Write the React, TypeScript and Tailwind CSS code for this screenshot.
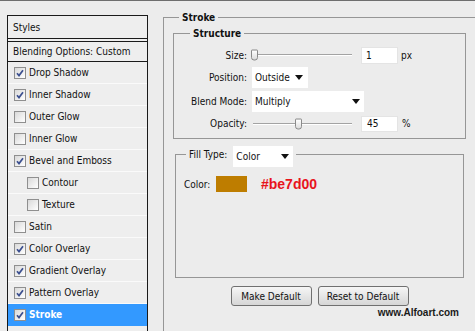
import React from "react";

const FONT = "font-['DejaVu_Sans_Condensed','Liberation_Sans',sans-serif]";

function Check({ checked }: { checked: boolean }) {
  return (
    <span className="w-[12px] h-[12px] shrink-0 border border-[#8f8f8f] bg-gradient-to-br from-[#d9d9d9] to-white flex items-center justify-center">
      {checked && (
        <svg width="8" height="8" viewBox="0 0 8 8">
          <path d="M1 4.2 L3 6.6 L7 1.2" stroke="#3b4f8f" strokeWidth="1.7" fill="none" />
        </svg>
      )}
    </span>
  );
}

function Tri() {
  return (
    <svg width="8" height="5" viewBox="0 0 8 5" className="shrink-0">
      <polygon points="0,0 8,0 4,5" fill="#111" />
    </svg>
  );
}

type Item = { label: string; checked: boolean; indent?: boolean; selected?: boolean };

const items: Item[] = [
  { label: "Drop Shadow", checked: true },
  { label: "Inner Shadow", checked: true },
  { label: "Outer Glow", checked: false },
  { label: "Inner Glow", checked: false },
  { label: "Bevel and Emboss", checked: true },
  { label: "Contour", checked: false, indent: true },
  { label: "Texture", checked: false, indent: true },
  { label: "Satin", checked: false },
  { label: "Color Overlay", checked: true },
  { label: "Gradient Overlay", checked: true },
  { label: "Pattern Overlay", checked: true },
  { label: "Stroke", checked: true, selected: true },
];

function Thumb({ className }: { className: string }) {
  return (
    <div
      className={
        "absolute top-1/2 -translate-y-1/2 w-[7px] h-[11px] border border-[#8a8a8a] rounded-b-[3px] rounded-t-[1px] bg-gradient-to-b from-white to-[#dcdcdc] " +
        className
      }
    />
  );
}

function Track() {
  return <div className="absolute left-[2px] right-0 top-1/2 -translate-y-1/2 h-[2px] border-t border-[#a3a3a3] border-b border-b-white" />;
}

export default function App() {
  return (
    <div className={"w-[475px] h-[331px] overflow-hidden bg-[#ececec] text-[10px] leading-[13px] text-[#111] " + FONT}>
      <div className="h-px bg-[#6e6e6e]" />
      <div className="flex">
        {/* Left styles panel */}
        <div className="ml-[7px] mt-[14px] w-[141px] h-[400px] shrink-0 border border-[#1a1a1a] bg-[#eeeeee]">
          <div className="h-[23px] flex items-center pl-[5px] border-b border-[#1a1a1a]">Styles</div>
          <div className="mt-[2px] border-t border-b border-[#1a1a1a] h-[21px] flex items-center pl-[5px]">
            Blending Options: Custom
          </div>
          {items.map((it) => (
            <div
              key={it.label}
              className={
                "h-[22px] flex items-center gap-[3px] border-b " +
                (it.indent ? "pl-[19px] " : "pl-[6px] ") +
                (it.selected ? "bg-[#3399ff] text-white font-bold border-[#3399ff]" : "border-[#fafafa]")
              }
            >
              <Check checked={it.checked} />
              <span>{it.label}</span>
            </div>
          ))}
        </div>

        {/* Main area */}
        <div className="ml-[15px] mt-[10px] shrink-0">
          <fieldset className="w-[330px] h-[340px] border-t border-l border-[#969696] pl-[9px]">
            <legend className="ml-[6px] px-[3px] font-bold leading-[13px]">Stroke</legend>

            <fieldset className="mt-[3px] w-[293px] border border-[#969696] pb-[6px]">
              <legend className="ml-[16px] px-[3px] font-bold leading-[13px]">Structure</legend>
              <div className="pt-[6px] flex flex-col gap-[3px]">
                <div className="h-[18px] flex items-center">
                  <span className="w-[73px] text-right">Size:</span>
                  <div className="relative ml-[4px] w-[101px] h-full">
                    <Track />
                    <Thumb className="left-0" />
                  </div>
                  <div className="ml-[9px] w-[37px] h-[17px] bg-white border border-[#e4e4e4] flex items-center pl-[4px]">1</div>
                  <span className="ml-[3px]">px</span>
                </div>
                <div className="h-[21px] flex items-center">
                  <span className="w-[73px] text-right">Position:</span>
                  <div className="ml-[5px] w-[56px] h-full bg-white flex items-center justify-between pl-[3px] pr-[5px]">
                    <span>Outside</span>
                    <Tri />
                  </div>
                </div>
                <div className="h-[21px] flex items-center">
                  <span className="w-[73px] text-right">Blend Mode:</span>
                  <div className="ml-[5px] w-[112px] h-full bg-white flex items-center justify-between pl-[3px] pr-[4px]">
                    <span>Multiply</span>
                    <Tri />
                  </div>
                </div>
                <div className="h-[17px] flex items-center">
                  <span className="w-[73px] text-right">Opacity:</span>
                  <div className="relative ml-[4px] w-[101px] h-full">
                    <Track />
                    <Thumb className="left-[44px]" />
                  </div>
                  <div className="ml-[9px] w-[37px] h-[16px] bg-white border border-[#e4e4e4] flex items-center pl-[5px]">45</div>
                  <span className="ml-[4px]">%</span>
                </div>
              </div>
            </fieldset>

            <fieldset className="mt-[7px] mx-[2px] w-[289px] border border-[#969696]">
              <legend className="ml-[10px] px-[3px] h-[16px]">
                <div className="flex items-start">
                  <span className="mt-[2px]">Fill Type:</span>
                  <div className="ml-[6px] w-[60px] h-[21px] bg-white flex items-center justify-between pl-[3px] pr-[4px]">
                    <span>Color</span>
                    <Tri />
                  </div>
                </div>
              </legend>
              <div className="h-[115px] pt-[14px] pl-[8px]">
                <div className="h-[16px] flex items-center">
                  <span className="w-[32px]">Color:</span>
                  <div className="w-[31px] h-[16px] bg-[#be7d00]" />
                  <span className="ml-[14px] font-['Liberation_Sans',sans-serif] font-bold text-[14px] leading-[16px] text-[#e8141c]">
                    #be7d00
                  </span>
                </div>
              </div>
            </fieldset>

            <div className="mt-[8px] w-[293px] flex justify-center gap-[6px]">
              <div className="w-[81px] h-[20px] rounded-[3px] border border-[#707070] bg-gradient-to-b from-[#f6f6f6] to-[#d6d6d6] flex items-center justify-center text-[10px]">
                Make Default
              </div>
              <div className="w-[91px] h-[20px] rounded-[3px] border border-[#707070] bg-gradient-to-b from-[#f6f6f6] to-[#d6d6d6] flex items-center justify-center text-[10px]">
                Reset to Default
              </div>
            </div>
            <div className="w-[293px] pr-[7px] text-right font-['Liberation_Sans',sans-serif] font-bold text-[10px] leading-[12px] text-[#1a1a1a] mt-[1px]">
              www.Alfoart.com
            </div>
          </fieldset>
        </div>
      </div>
    </div>
  );
}
